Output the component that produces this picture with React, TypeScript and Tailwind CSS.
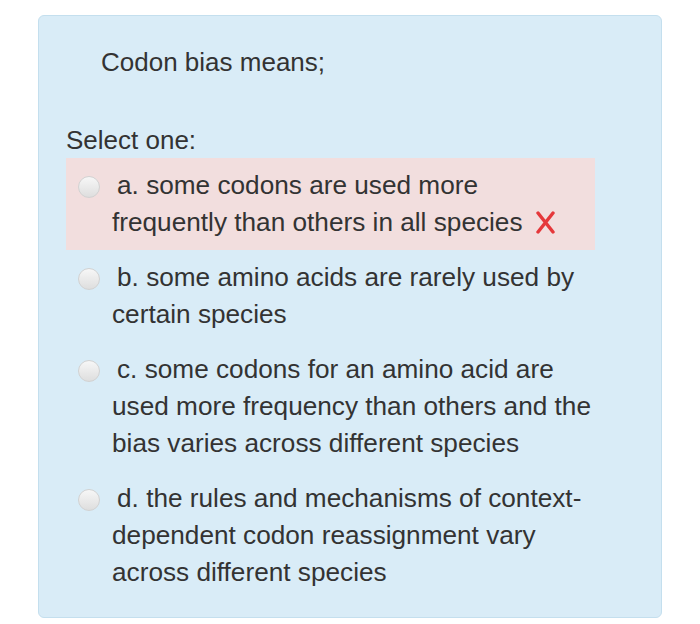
type Option = { key: string; lines: string[]; wrong?: boolean };

const options: Option[] = [
  { key: "a", lines: ["some codons are used more", "frequently than others in all species"], wrong: true },
  { key: "b", lines: ["some amino acids are rarely used by", "certain species"] },
  {
    key: "c",
    lines: [
      "some codons for an amino acid are",
      "used more frequency than others and the",
      "bias varies across different species",
    ],
  },
  {
    key: "d",
    lines: [
      "the rules and mechanisms of context-",
      "dependent codon reassignment vary",
      "across different species",
    ],
  },
];

export default function App() {
  return (
    <div className="bg-white min-h-screen pt-[15px] pl-[38px] font-['Liberation_Sans',Arial,sans-serif] text-[#333333]">
      <div className="w-[624px] h-[603px] rounded-[6px] border border-[#c4dfee] bg-[#d9ecf7] pt-[28px] pl-[27px]">
        <p className="pl-[35px] text-[26px] leading-[36px]">Codon bias means;</p>

        <p className="mt-[42px] text-[26px] leading-[36px]">Select one:</p>

        <div className="flex flex-col">
          {options.map((o) => (
            <div
              key={o.key}
              className={`w-[529px] py-[9px] pl-[46px] text-[26.2px] leading-[37px] whitespace-nowrap ${
                o.wrong ? "bg-[#f2dede]" : ""
              }`}
            >
              {o.lines.map((line, i) => (
                <div key={i}>
                  {i === 0 && (
                    <>
                      <span className="inline-block align-[-4px] -ml-[34px] mr-[17px] w-[22px] h-[22px] rounded-full bg-gradient-to-b from-[#f7f7f7] to-[#dedede] border border-[#d2d2d2]" />
                      {o.key}.{" "}
                    </>
                  )}
                  {line}
                  {o.wrong && i === o.lines.length - 1 && (
                    <svg className="inline-block ml-[12px] align-[-3px]" width="21" height="23" viewBox="0 0 21 23">
                      <path d="M3 2 L18 21 M18 2 L3 21" stroke="#e5383b" strokeWidth="3.4" strokeLinecap="round" />
                    </svg>
                  )}
                </div>
              ))}
            </div>
          ))}
        </div>
      </div>
    </div>
  );
}
